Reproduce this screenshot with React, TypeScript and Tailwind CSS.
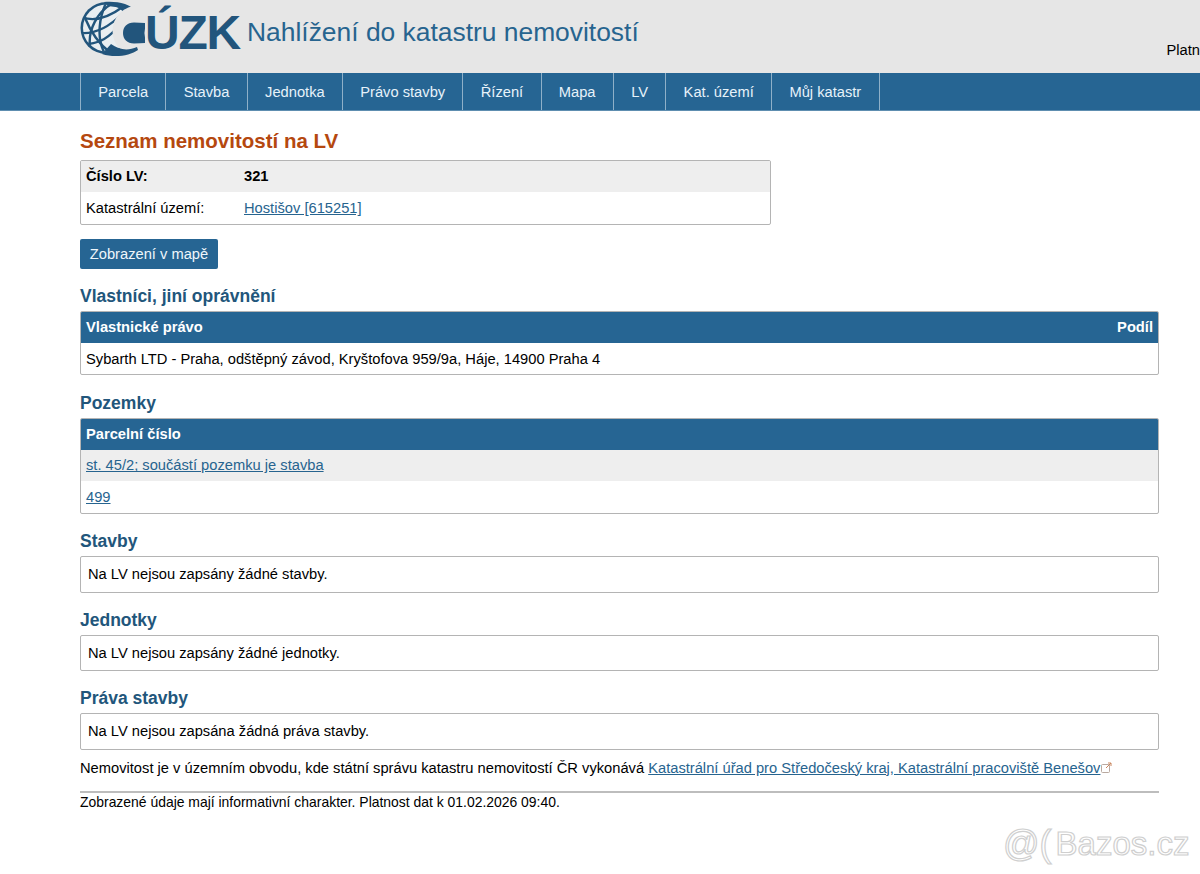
const font = { fontFamily: '"Liberation Sans", Arial, sans-serif' };

const navItems = ["Parcela", "Stavba", "Jednotka", "Právo stavby", "Řízení", "Mapa", "LV", "Kat. území", "Můj katastr"];

function Globe() {
  const dark = "#22557c";
  return (
    <svg width="65" height="58" viewBox="80 0 65 58" className="shrink-0">
      <defs>
        <clipPath id="gl"><circle cx="106.5" cy="28" r="24" /></clipPath>
      </defs>
      <circle cx="106.5" cy="28" r="26" fill={dark} />
      <circle cx="106.5" cy="28" r="23.5" fill="#e9eef1" />
      <g clipPath="url(#gl)" fill="none" stroke={dark} strokeWidth="2.4">
        <path d="M82 17 C94 22 108 18 124 6" />
        <path d="M81 33 C94 34 108 28 122 14" />
        <path d="M85 44 C95 44 106 40 115 30" />
        <path d="M90 46 C88 30 97 12 113 3" />
        <path d="M104 52 C96 36 100 16 106 3" />
        <path d="M85 18 C90 30 98 44 112 54" />
      </g>
      <path d="M104 2 C116 1 130 3 137 12 L137 15 C128 9 118 7 108 6 Z" fill={dark} />
      <circle cx="138" cy="31" r="25.5" fill="#e6e6e6" />
      <path d="M102 54 C114 58 130 56 138 50 L137 47 C128 51 119 50 111 44 Z" fill={dark} />
      <path d="M145 28.5 C141 28 137 28 134 28 C130 28 128.5 30 128.5 33 C128.5 36 130 38 134 38 C137 38 141 38 145 37.5" fill="none" stroke={dark} strokeWidth="11" />
    </svg>
  );
}

function Heading({ children }: { children: React.ReactNode }) {
  return <h2 className="text-[17.5px] leading-[22px] font-bold text-[#22567b]">{children}</h2>;
}

function Notice({ children }: { children: React.ReactNode }) {
  return (
    <div className="mt-[4px] h-[36.5px] border border-[#b4b4b4] rounded-[2px] px-[7px] flex items-center text-black">
      {children}
    </div>
  );
}

function HeadRow({ left, right }: { left: string; right?: string }) {
  return (
    <div className="h-[31px] bg-[#266593] text-white font-bold px-[5px] flex items-center justify-between">
      <span>{left}</span>
      {right && <span>{right}</span>}
    </div>
  );
}

const linkCls = "text-[#27648f] underline";

export default function App() {
  return (
    <div style={font} className="relative w-[1200px] h-[874px] bg-white overflow-hidden text-[14.7px] text-black">
      <header className="h-[73px] bg-[#e6e6e6] pl-[80px] flex items-start whitespace-nowrap">
        <div className="flex items-start">
          <Globe />
          <span className="ml-[0px] mt-[5px] text-[48px] leading-[56px] font-bold text-[#22557c] tracking-[-1.2px]">ÚZK</span>
        </div>
        <span className="ml-[7px] mt-[13px] text-[26.4px] leading-[38px] text-[#27648f]">Nahlížení do katastru nemovitostí</span>
        <span className="ml-auto mt-[41px] leading-[18px]">Platn</span>
      </header>
      <nav className="h-[38px] bg-[#266593] pl-[80px] flex border-b border-[#5e8eb0]">
        <div className="flex border-l border-[#8fb0c8]">
          {navItems.map((n) => (
            <div key={n} className="h-full px-[17.3px] pt-[1px] flex items-center text-[#e6f2fa] border-r border-[#8fb0c8]">{n}</div>
          ))}
        </div>
      </nav>
      <main className="pl-[80px] pr-[41px] pt-[18px]">
        <h1 className="text-[20.5px] leading-[24px] font-bold text-[#b5480f]">Seznam nemovitostí na LV</h1>
        <div className="mt-[7px] w-[691px] border border-[#b4b4b4] rounded-[2px] overflow-hidden">
          <div className="h-[31px] bg-[#eeeeee] px-[5px] flex items-center font-bold">
            <span className="w-[158px]">Číslo LV:</span>
            <span>321</span>
          </div>
          <div className="h-[31.5px] px-[5px] pt-[1px] flex items-center">
            <span className="w-[158px]">Katastrální území:</span>
            <span className={linkCls}>Hostišov [615251]</span>
          </div>
        </div>
        <button className="mt-[14.5px] block h-[30px] w-[138px] bg-[#266593] rounded-[2px] text-[#eef6fb] text-center">Zobrazení v mapě</button>

        <div className="mt-[15.5px]"><Heading>Vlastníci, jiní oprávnění</Heading></div>
        <div className="mt-[4.5px] border border-[#b4b4b4] rounded-[2px] overflow-hidden">
          <HeadRow left="Vlastnické právo" right="Podíl" />
          <div className="h-[31px] px-[5px] pt-[1px] flex items-center">Sybarth LTD - Praha, odštěpný závod, Kryštofova 959/9a, Háje, 14900 Praha 4</div>
        </div>

        <div className="mt-[16.5px]"><Heading>Pozemky</Heading></div>
        <div className="mt-[4.5px] border border-[#b4b4b4] rounded-[2px] overflow-hidden">
          <HeadRow left="Parcelní číslo" />
          <div className="h-[31px] bg-[#eeeeee] px-[5px] flex items-center"><span className={linkCls}>st. 45/2; součástí pozemku je stavba</span></div>
          <div className="h-[32px] px-[5px] flex items-center"><span className={linkCls}>499</span></div>
        </div>

        <div className="mt-[16px]"><Heading>Stavby</Heading></div>
        <Notice>Na LV nejsou zapsány žádné stavby.</Notice>

        <div className="mt-[16px]"><Heading>Jednotky</Heading></div>
        <Notice>Na LV nejsou zapsány žádné jednotky.</Notice>

        <div className="mt-[16px]"><Heading>Práva stavby</Heading></div>
        <Notice>Na LV nejsou zapsána žádná práva stavby.</Notice>

        <p className="mt-[9px] leading-[18px] whitespace-nowrap flex items-center">
          <span>Nemovitost je v územním obvodu, kde státní správu katastru nemovitostí ČR vykonává&nbsp;</span>
          <span className={linkCls}>Katastrální úřad pro Středočeský kraj, Katastrální pracoviště Benešov</span>
          <svg width="11" height="11" viewBox="0 0 11 11" fill="none" className="ml-[1px]">
            <rect x="0.5" y="2.5" width="8" height="8" rx="1" stroke="#b9a9a0" />
            <path d="M5 6 L10 1 M7 1 H10 V4" stroke="#c9865f" />
          </svg>
        </p>
        <div className="mt-[14.5px] border-t-2 border-[#bdbdbd] text-[13.93px] leading-[18px]">Zobrazené údaje mají informativní charakter. Platnost dat k 01.02.2026 09:40.</div>
      </main>
      <div className="absolute left-[1003px] top-[822px] flex items-center gap-[4px] text-transparent [-webkit-text-stroke:1.2px_#cfcfcf] whitespace-nowrap">
        <span className="text-[36px] leading-[44px]">@(</span>
        <span className="text-[33px] leading-[44px]">Bazos.cz</span>
      </div>
    </div>
  );
}
